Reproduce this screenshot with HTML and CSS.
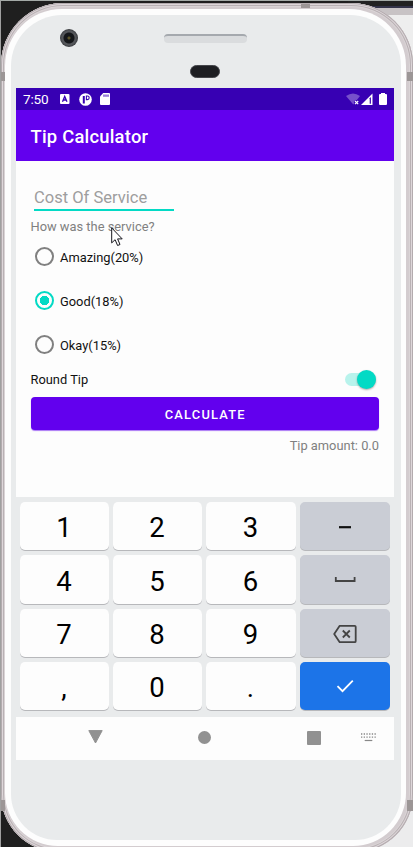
FILE: index.html
```html
<!DOCTYPE html>
<html lang="en">
<head>
<meta charset="utf-8">
<title>Tip Calculator</title>
<link rel="stylesheet" href="styles.css">
</head>
<body>
<div class="desk">
  <div class="phone"><div class="rim"><div class="face">
    <div class="top">
      <span class="camera"></span><span class="speaker"></span><span class="sensor"></span>
    </div>
    <main class="screen">
      <div class="status">
        <span class="time">7:50</span>
        <svg class="s-a" width="10" height="10" viewBox="0 0 10 10"><rect width="9.5" height="10" rx="1" fill="#fff"/><path d="M2.5 7.8 4.7 2.4 7 7.8M3.3 6h2.9" fill="none" stroke="#3700b3" stroke-width="1.3"/></svg>
        <svg class="s-p" width="13" height="13" viewBox="0 0 13 13"><circle cx="6.5" cy="6.5" r="6.3" fill="#fff"/><path d="M4.8 3v7.5" stroke="#3700b3" stroke-width="2"/><path d="M7.4 3h1a1.7 1.7 0 0 1 0 3.6h-1z" fill="none" stroke="#3700b3" stroke-width="1.1"/></svg>
        <svg class="s-sd" width="10" height="12" viewBox="0 0 10 12"><path d="M3.2 0H9q1 0 1 1v10q0 1-1 1H1q-1 0-1-1V3.4z" fill="#fff"/><path d="M4 1.5v2.3M6 1.5v2.3M8 1.5v2.3" stroke="#3700b3"/></svg>
        <svg class="s-right" width="42" height="13" viewBox="0 0 42 13"><path d="M0 3Q7-2 14 3L7.3 11.5z" fill="#7650cb"/><path d="m8.8 7.7 3.4 3.4m0-3.4-3.4 3.4" stroke="#3700b3" stroke-width="3"/><path d="m9 8 3.2 3.2m0-3.2L9 11.2" stroke="#fff" stroke-width="1.2"/><path d="M15 12 26.5.5V12z" fill="#fff"/><path d="M23.7 5.2v5.5h1.2V4z" fill="#3700b3"/><path d="M35 1V0h4v1h1q1 0 1 1v9q0 1-1 1h-6q-1 0-1-1V2q0-1 1-1z" fill="#fff"/></svg>
      </div>
      <header class="appbar">Tip Calculator</header>
      <section class="form">
        <div class="field">Cost Of Service</div>
        <div class="question">How was the service?</div>
        <div class="radios">
          <label class="option"><i class="radio"></i>Amazing(20%)</label>
          <label class="option"><i class="radio on"></i>Good(18%)</label>
          <label class="option"><i class="radio"></i>Okay(15%)</label>
        </div>
        <div class="round"><span>Round Tip</span><span class="switch"><i></i></span></div>
        <div class="calc">CALCULATE</div>
        <div class="amount">Tip amount: 0.0</div>
        <svg class="cursor" width="13" height="20" viewBox="0 0 13 20"><path d="M.7.9v15l3.4-3.2 2.5 5.8 2.4-1-2.4-5.6h4.6z" fill="#fff" stroke="#15151c"/></svg>
      </section>
      <section class="keys">
        <div class="key">1</div><div class="key">2</div><div class="key">3</div>
        <div class="key fn"><svg width="12" height="3"><path d="M0 1.2h12" stroke="#111" stroke-width="2.2"/></svg></div>
        <div class="key">4</div><div class="key">5</div><div class="key">6</div>
        <div class="key fn"><svg width="22" height="8" viewBox="0 0 22 8"><path d="M1.8 1v4h18.8V1" fill="none" stroke="#444" stroke-width="1.8"/></svg></div>
        <div class="key">7</div><div class="key">8</div><div class="key">9</div>
        <div class="key fn"><svg width="24" height="20" viewBox="0 0 24 20"><path d="M6.7 1.8h15q1 0 1 1v14.4q0 1-1 1h-15L1.2 10z" fill="none" stroke="#444" stroke-width="1.8" stroke-linejoin="round"/><path d="m9.8 6.5 7 7m0-7-7 7" stroke="#444" stroke-width="1.8"/></svg></div>
        <div class="key">,</div><div class="key">0</div><div class="key">.</div>
        <div class="key go"><svg width="18" height="14" viewBox="0 0 18 14"><path d="m1.5 7.2 5 5L16.8 1.6" fill="none" stroke="#fff" stroke-width="1.8"/></svg></div>
      </section>
      <nav class="nav">
        <svg class="back" width="15" height="14"><path d="M.8.6h13.4L7.5 13z" fill="#919191" stroke="#919191" stroke-linejoin="round"/></svg>
        <i class="home"></i><i class="recent"></i>
        <svg class="kb" width="15" height="9" viewBox="0 0 15 9"><path d="M0 1h15M0 4.2h15" stroke="#888" stroke-width="1.3" stroke-dasharray="1.3 1.4"/><path d="M3.7 7.5h7.6" stroke="#888" stroke-width="1.2"/></svg>
      </nav>
    </main>
  </div></div></div>
  <i class="seam l1"></i><i class="seam r1"></i><i class="seam t1"></i><i class="seam l2"></i><i class="seam r2"></i>
</div>
</body>
</html>
```
FILE: styles.css
```css
* { box-sizing: border-box; }
body { margin: 0; font-family: Roboto, "Liberation Sans", sans-serif; }
svg { display: block; flex: none; }

.desk {
  position: relative;
  width: 413px;
  height: 847px;
  overflow: hidden;
  padding-top: 2px;
  border-top: 1px solid #a4aaa7;
  background:
    linear-gradient(#222 0 5px, #34344a 5px 7px, #c8c3c5 7px 14px, #eee 14px) right top / 65px 780px no-repeat,
    linear-gradient(#ececed, #ececed) right bottom / 65px 90px no-repeat,
    #1f1f1f;
  border-left: 1px solid #a0a0a0;
}
.phone {
  width: 412px;
  height: 849px;
  padding: 6px 7px 6px 4px;
  border-radius: 62px 62px 58px 58px;
  background: #d3cccf;
  box-shadow: inset 0 0 0 1px #b3abae, inset 0 0 0 2px #ded7da, inset 0 0 0 3px #b9b1b4, inset 0 0 0 4px #dad4d6;
}
.rim { height: 837px; padding: 6px 5px 6px 6px; border-radius: 57px 57px 53px 53px; background: #fdfdfd; }
.face { height: 825px; padding: 0 5px; border-radius: 51px 51px 46px 46px; background: #e9ebec; }

.top { height: 73px; position: relative; }
.camera, .speaker, .sensor { position: absolute; }
.camera {
  left: 44px; top: 14px; width: 18px; height: 18px; border-radius: 50%;
  background: radial-gradient(circle, #5c5428 0 1px, #15171a 2px 5px, #55575b 6px 7px, #37393c 9px);
}
.speaker { left: 148px; top: 19px; width: 83px; height: 9px; border-radius: 4px; background: #dadcde; border-top: 2px solid #a5a9ae; }
.sensor { left: 174px; top: 50px; width: 30px; height: 13px; border-radius: 7px; background: #1d1e22; border: 1px solid #45464b; }

.screen { width: 378px; height: 672px; display: flex; flex-direction: column; }
.status { height: 22px; display: flex; align-items: center; padding: 0 7px; background: #3700b3; }
.time { width: 37px; color: #fff; font-size: 13.6px; letter-spacing: -.2px; line-height: 22px; }
.s-p { margin-left: 9px; }
.s-sd { margin-left: 8px; }
.s-right { margin-left: auto; margin-right: -1px; }
.appbar { height: 51px; padding-left: 14.5px; background: #6200ee; color: #fff; font-size: 18.4px; font-weight: 500; line-height: 53px; letter-spacing: .22px; }

.form { position: relative; height: 336px; padding: 22px 15px 0 14px; background: #fdfdfd; font-size: 12.87px; color: #111; }
.field { width: 140px; height: 28px; margin-left: 4px; line-height: 29px; font-size: 16.55px; color: #9e9e9e; border-bottom: 2px solid #03dac5; white-space: nowrap; }
.question { height: 24px; padding-left: .5px; line-height: 31px; color: #808080; }
.radios { height: 132px; }
.option { display: flex; height: 44px; align-items: center; gap: 6px; padding-left: 5px; }
.radio { width: 19px; height: 19px; margin-top: -1px; border: 2px solid #808080; border-radius: 50%; }
.radio.on { border-color: #03dac5; background: radial-gradient(circle, #03dac5 0 4.5px, transparent 5px); }
.round { height: 24px; display: flex; justify-content: space-between; align-items: center; padding: 0 3px 0 .5px; }
.switch { width: 31px; height: 13px; border-radius: 7px; background: #b8f3ec; display: flex; justify-content: flex-end; align-items: center; }
.switch i { width: 19px; height: 19px; flex: none; border-radius: 50%; background: #03dac5; box-shadow: 0 1px 2px #0005; }
.calc { height: 33px; margin-top: 6px; margin-left: .5px; border-radius: 4px; background: #6200ee; color: #fff; font-weight: 500; line-height: 35px; text-align: center; text-indent: 1px; letter-spacing: 1.22px; box-shadow: 0 1px 1px #6200ee88; }
.amount { line-height: 31px; text-align: right; color: #808080; }
.cursor { position: absolute; left: 95px; top: 66px; }

.keys {
  height: 220px; padding: 5px 4px 7px; background: #e9ebec;
  display: grid; grid-template-columns: 89px 89px 90px 90px; grid-template-rows: repeat(4, 1fr); gap: 5px 4px;
}
.key { display: flex; align-items: center; justify-content: center; padding: 4px 1px 0 0; background: #fdfdfd; border-radius: 5px; box-shadow: 0 1px 0 #b7b8bb; color: #000; font-size: 27.5px; line-height: 1; }
.key.fn { background: #cacdd5; padding: 2px 1px 0 0; }
.key.go { background: #1c74e8; padding: 1px 0 0; }

.nav { height: 43px; background: #fdfdfd; display: flex; align-items: center; padding: 0 0 2px 72px; }
.back { margin-top: -1px; }
.home { width: 13px; height: 13px; margin-left: 95px; border-radius: 50%; background: #919191; }
.recent { width: 14px; height: 14px; margin-left: 96px; border-radius: 1px; background: #919191; }
.kb { margin-left: 40px; }

.seam { position: absolute; background: #9c9696; }
.l1, .r1 { top: 71px; height: 9px; width: 4px; }
.l2, .r2 { top: 799px; height: 11px; width: 4px; }
.l1, .l2 { left: 0; }
.r1, .r2 { right: 0; width: 6px; }
.t1 { left: 300px; top: 3px; width: 9px; height: 4px; }
```
